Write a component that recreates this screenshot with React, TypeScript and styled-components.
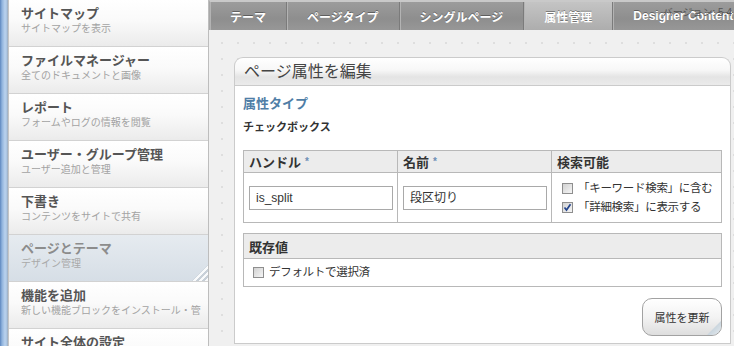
import styled, { createGlobalStyle } from 'styled-components'

const GlobalStyle = createGlobalStyle`
	html, body {
		margin: 0;
		padding: 0;
		background: #fff;
	}
	body {
		font-family: 'Liberation Sans', 'Noto Sans CJK JP', sans-serif;
		color: #333;
	}
`

const Page = styled.div`
	display: flex;
	width: 734px;
	height: 346px;
	overflow: hidden;
`

const Sidebar = styled.aside`
	display: flex;
	width: 209px;
	flex-shrink: 0;
	background: #fff;
`

const Strip = styled.div`
	width: 8px;
	flex-shrink: 0;
	background: linear-gradient(to right, #5d87bf 0, #8fb2dc 2px, #b9d2ee 5px, #a9c2df 7px, #9aa7b6 8px);
`

const Nav = styled.nav`
	display: flex;
	flex-direction: column;
	width: 200px;
	border-left: 1px solid #c4c4c4;
	border-right: 1px solid #bdbdbd;
`

const NavItem = styled.div<{ $active?: boolean }>`
	position: relative;
	flex-shrink: 0;
	height: 47px;
	padding: 5px 0 0 12px;
	box-sizing: border-box;
	border-bottom: 1px solid #d2d2d2;
	overflow: hidden;
	white-space: nowrap;
	background: ${p =>
		p.$active
			? 'linear-gradient(#e6ebf0, #d6dee6)'
			: 'linear-gradient(#ffffff 0%, #fafafa 45%, #ebebeb 100%)'};
`

const NavTitle = styled.div<{ $active?: boolean }>`
	font-size: 13px;
	font-weight: bold;
	line-height: 17px;
	color: ${p => (p.$active ? '#8c8c8c' : '#555')};
`

const NavSub = styled.div<{ $active?: boolean }>`
	font-size: 10px;
	line-height: 14px;
	color: ${p => (p.$active ? '#a9a9a9' : '#a3a3a3')};
`

const Grip = styled.span`
	position: absolute;
	right: 0;
	bottom: 0;
	width: 16px;
	height: 16px;
	clip-path: polygon(100% 0, 100% 100%, 0 100%);
	background: repeating-linear-gradient(135deg, rgba(255, 255, 255, 0.85) 0 2px, rgba(190, 198, 206, 0.6) 2px 4px);
`

const Main = styled.main`
	position: relative;
	display: flex;
	flex-direction: column;
	flex: 1;
	min-width: 0;
	background-color: #f0f0f0;
	background-image: radial-gradient(circle, #dedede 0.8px, transparent 1.4px);
	background-size: 16px 16px;
	background-position: 5px 3px;
`

const TabBar = styled.div`
	display: flex;
	height: 28px;
	flex-shrink: 0;
	border-top: 2px solid #c9c9c9;
	border-left: 1px solid #a8a8a8;
	background: linear-gradient(#9c9c9c, #8e8e8e 60%, #979797);
	white-space: nowrap;
`

const Tab = styled.div<{ $active?: boolean }>`
	display: flex;
	align-items: center;
	padding: 0 20px;
	font-size: 12px;
	font-weight: bold;
	color: #fff;
	text-shadow: 0 -1px 0 rgba(0, 0, 0, 0.35);
	border-right: 1px solid #7b7b7b;
	box-shadow: inset 1px 0 0 #b3b3b3;
	background: ${p => (p.$active ? 'linear-gradient(#c4c4c4, #adadad)' : 'transparent')};
`

const Version = styled.span`
	position: absolute;
	top: 4px;
	right: 2px;
	font-size: 10px;
	color: #555;
`

const Content = styled.div`
	display: flex;
	flex: 1;
	padding: 27px 3px 2px 25px;
	min-height: 0;
`

const Panel = styled.section`
	display: flex;
	flex-direction: column;
	flex: 1;
`

const PanelHeader = styled.h2`
	margin: 0;
	height: 27px;
	padding-left: 9px;
	border: 1px solid #cbcbcb;
	border-bottom: none;
	border-radius: 9px 9px 0 0;
	background: linear-gradient(#ffffff 0%, #f7f7f7 45%, #e4e4e4 70%, #ebebeb 100%);
	font-size: 16px;
	font-weight: normal;
	line-height: 27px;
	color: #444;
`

const PanelBody = styled.div`
	display: flex;
	flex-direction: column;
	flex: 1;
	padding: 8px 8px 0;
	background: #fff;
	border: 1px solid #cbcbcb;
`

const SectionTitle = styled.h3`
	margin: 0;
	font-size: 13px;
	line-height: 20px;
	font-weight: bold;
	color: #4f7ea6;
`

const TypeName = styled.div`
	margin-top: 3px;
	font-size: 11px;
	line-height: 20px;
	font-weight: bold;
	color: #333;
`

const Table = styled.table<{ $gap: number }>`
	width: 479px;
	margin-top: ${p => p.$gap}px;
	border-collapse: collapse;
	table-layout: fixed;

	th,
	td {
		border: 1px solid #b8b8b8;
		text-align: left;
		padding: 0 5px;
	}
`

const HeadCell = styled.th<{ $h: number }>`
	height: ${p => p.$h}px;
	background: #ececec;
	font-size: 13px;
	font-weight: bold;
	color: #333;
`

const Req = styled.span`
	margin-left: 4px;
	font-size: 10px;
	color: #6e8fb5;
	vertical-align: 2px;
`

const Cell = styled.td<{ $h: number }>`
	height: ${p => p.$h}px;
	vertical-align: middle;
`

const TextInput = styled.div`
	width: 144px;
	height: 24px;
	box-sizing: border-box;
	padding: 0 6px;
	border: 1px solid #a9a9a9;
	font-size: 12px;
	line-height: 22px;
	color: #333;
`

const CheckRow = styled.label<{ $indent: number }>`
	display: flex;
	align-items: center;
	gap: 3px;
	padding-left: ${p => p.$indent}px;
	font-size: 11.5px;
	letter-spacing: -0.3px;
	line-height: 19px;
	color: #333;
	white-space: nowrap;
`

const Box = styled.span`
	display: inline-flex;
	align-items: center;
	justify-content: center;
	width: 11px;
	height: 11px;
	box-sizing: border-box;
	border: 1px solid #8e8e8e;
	background: linear-gradient(135deg, #d2d2d2, #f5f5f5);
	flex-shrink: 0;
	margin-right: 2px;
`

const Actions = styled.div`
	display: flex;
	justify-content: flex-end;
	width: 479px;
	margin-top: 11px;
`

const Button = styled.button`
	position: relative;
	width: 80px;
	height: 38px;
	border: 1px solid #a2a2a2;
	border-radius: 10px;
	background: linear-gradient(#ffffff, #f3f3f3 50%, #dedede);
	box-shadow: inset 0 1px 0 #fff;
	font-family: inherit;
	font-size: 11px;
	color: #333;
	overflow: hidden;
`

const ButtonGrip = styled.span`
	position: absolute;
	right: 0;
	bottom: 0;
	width: 14px;
	height: 14px;
	clip-path: polygon(100% 0, 100% 100%, 0 100%);
	background: linear-gradient(135deg, transparent 45%, #c7d3dc 45%, #e6ecf0 100%);
`

const Checkbox = ({ checked }: { checked?: boolean }) => (
	<Box>
		{checked && (
			<svg width="9" height="9" viewBox="0 0 9 9">
				<path d="M1.5 4.5 L3.5 7 L7.5 1.2" fill="none" stroke="#23448c" strokeWidth="1.7" />
			</svg>
		)}
	</Box>
)

const navItems = [
	{ title: 'サイトマップ', sub: 'サイトマップを表示' },
	{ title: 'ファイルマネージャー', sub: '全てのドキュメントと画像' },
	{ title: 'レポート', sub: 'フォームやログの情報を閲覧' },
	{ title: 'ユーザー・グループ管理', sub: 'ユーザー追加と管理' },
	{ title: '下書き', sub: 'コンテンツをサイトで共有' },
	{ title: 'ページとテーマ', sub: 'デザイン管理', active: true },
	{ title: '機能を追加', sub: '新しい機能ブロックをインストール・管' },
	{ title: 'サイト全体の設定', sub: '' },
]

const tabs = ['テーマ', 'ページタイプ', 'シングルページ', '属性管理', 'Designer Content']

const App = () => {
	return (
		<Page>
			<GlobalStyle />
			<Sidebar>
				<Strip />
				<Nav>
					{navItems.map(item => (
						<NavItem key={item.title} $active={item.active}>
							<NavTitle $active={item.active}>{item.title}</NavTitle>
							<NavSub $active={item.active}>{item.sub}</NavSub>
							{item.active && <Grip />}
						</NavItem>
					))}
				</Nav>
			</Sidebar>
			<Main>
				<TabBar>
					{tabs.map(t => (
						<Tab key={t} $active={t === '属性管理'}>
							{t}
						</Tab>
					))}
				</TabBar>
				<Version>バージョン: 5.4</Version>
				<Content>
					<Panel>
						<PanelHeader>ページ属性を編集</PanelHeader>
						<PanelBody>
							<SectionTitle>属性タイプ</SectionTitle>
							<TypeName>チェックボックス</TypeName>
							<Table $gap={13}>
								<colgroup>
									<col style={{ width: 154 }} />
									<col style={{ width: 154 }} />
									<col />
								</colgroup>
								<thead>
									<tr>
										<HeadCell $h={21}>
											ハンドル<Req>*</Req>
										</HeadCell>
										<HeadCell $h={21}>
											名前<Req>*</Req>
										</HeadCell>
										<HeadCell $h={21}>検索可能</HeadCell>
									</tr>
								</thead>
								<tbody>
									<tr>
										<Cell $h={49}>
											<TextInput>is_split</TextInput>
										</Cell>
										<Cell $h={49}>
											<TextInput>段区切り</TextInput>
										</Cell>
										<Cell $h={49}>
											<CheckRow $indent={5}>
												<Checkbox />
												「キーワード検索」に含む
											</CheckRow>
											<CheckRow $indent={5}>
												<Checkbox checked />
												「詳細検索」に表示する
											</CheckRow>
										</Cell>
									</tr>
								</tbody>
							</Table>
							<Table $gap={10}>
								<thead>
									<tr>
										<HeadCell $h={24}>既存値</HeadCell>
									</tr>
								</thead>
								<tbody>
									<tr>
										<Cell $h={27}>
											<CheckRow $indent={4}>
												<Checkbox />
												デフォルトで選択済
											</CheckRow>
										</Cell>
									</tr>
								</tbody>
							</Table>
							<Actions>
								<Button>
									属性を更新
									<ButtonGrip />
								</Button>
							</Actions>
						</PanelBody>
					</Panel>
				</Content>
			</Main>
		</Page>
	)
}

export default App
